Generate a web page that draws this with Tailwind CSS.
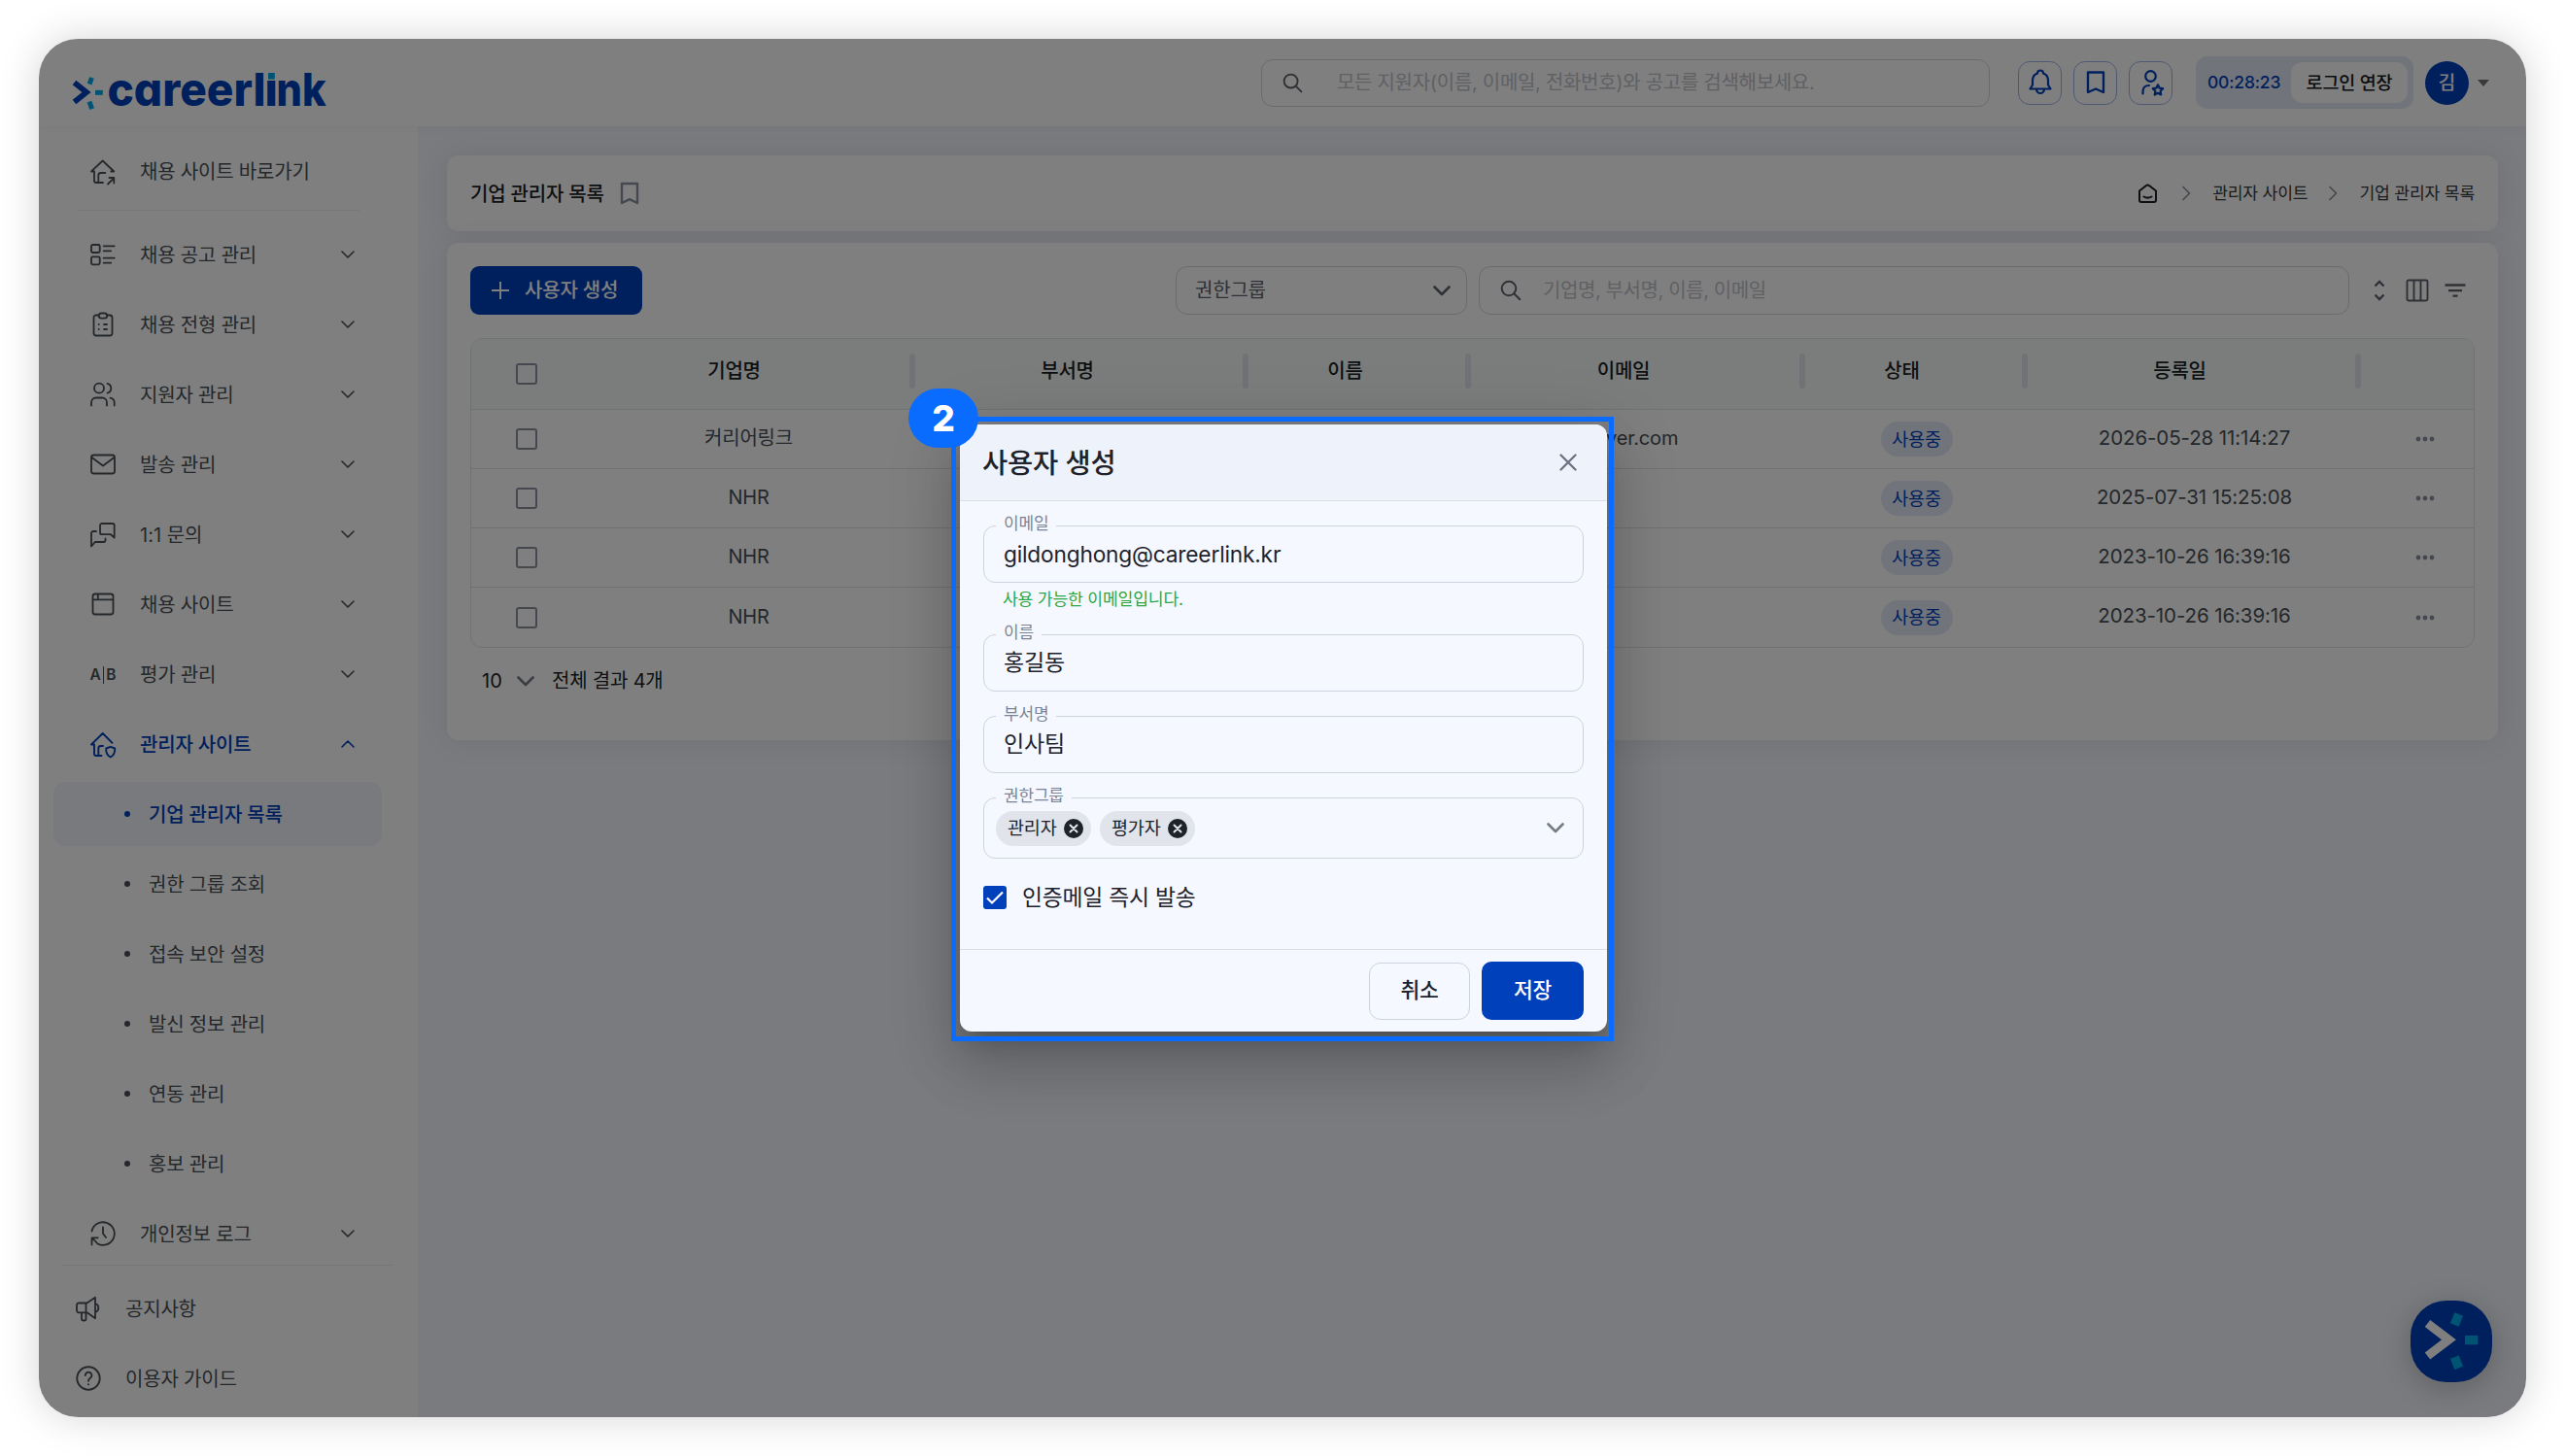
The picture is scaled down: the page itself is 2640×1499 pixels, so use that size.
<!DOCTYPE html>
<html lang="ko">
<head>
<meta charset="utf-8">
<title>careerlink - 기업 관리자 목록</title>
<script src="https://cdn.jsdelivr.net/npm/@tailwindcss/browser@4"></script>
</head>
<body class="w-[2640px] h-[1499px] overflow-hidden bg-white p-10 font-['Inter','Noto_Sans_CJK_KR',sans-serif] text-[20px] leading-none tracking-[-0.01em] whitespace-nowrap text-[#495057]">

<!-- shared symbols -->
<svg class="hidden">
  <symbol id="down" viewBox="0 0 14 8"><path d="M1 1l6 6 6-6" fill="none" stroke="currentColor" stroke-width="1.6" stroke-linecap="round" stroke-linejoin="round"/></symbol>
  <symbol id="drop" viewBox="0 0 18 11"><path d="M1.5 1.5L9 9l7.5-7.5" fill="none" stroke="currentColor" stroke-width="2.6" stroke-linecap="round" stroke-linejoin="round"/></symbol>
  <symbol id="right" viewBox="0 0 9 16"><path d="M1 1.5L7.5 8 1 14.500" fill="none" stroke="currentColor" stroke-width="1.7" stroke-linecap="round" stroke-linejoin="round"/></symbol>
  <symbol id="search" viewBox="0 0 22 22"><circle cx="9" cy="9" r="7.300" fill="none" stroke="currentColor" stroke-width="2"/><path d="M14.300 14.300l6 6" stroke="currentColor" stroke-width="2" stroke-linecap="round"/></symbol>
  <symbol id="remove" viewBox="0 0 20 20"><circle cx="10" cy="10" r="10" fill="#1d222b"/><path d="M6.500 6.500l7 7M13.500 6.500l-7 7" stroke="#e1e4ea" stroke-width="2" stroke-linecap="round"/></symbol>
  <symbol id="dots" viewBox="0 0 20 6"><circle cx="3" cy="3" r="2.400" fill="currentColor"/><circle cx="10" cy="3" r="2.400" fill="currentColor"/><circle cx="17" cy="3" r="2.400" fill="currentColor"/></symbol>
</svg>

<div class="relative h-[1419px] w-[2560px] rounded-[40px] shadow-[0_0_40px_rgba(0,0,0,0.17)]">
 <div class="relative flex h-[1419px] w-[2560px] flex-col overflow-hidden rounded-[40px] bg-white">

  <!-- header -->
  <header class="relative z-10 flex h-[90px] shrink-0 items-center bg-white pr-[38px] pl-[33px] shadow-[0_0_12px_rgba(0,0,0,0.05)]">
    <svg class="mt-[10px] h-[80px] w-[280px]" viewBox="73 50 280 80">
      <path d="M76.500 85l12.500 10-12.500 10" fill="none" stroke="#0041bb" stroke-width="5.800"/>
      <g fill="#00a9e6"><rect x="-2.500" y="-3.500" width="5" height="7" transform="translate(93.300 83.300) rotate(20)"/><rect x="98" y="92.800" width="7.800" height="5"/><rect x="-2.500" y="-4" width="5" height="8" transform="translate(93.300 108.300) rotate(-20)"/></g>
      <g class="font-['Inter'] text-[47px] font-extrabold tracking-normal [font-feature-settings:'cv11']" fill="#0041bb">
        <text y="109"><tspan x="110.500" textLength="163" lengthAdjust="spacingAndGlyphs">careerl</tspan><tspan x="272.500">i</tspan><tspan x="284.500" textLength="51" lengthAdjust="spacingAndGlyphs">nk</tspan></text>
      </g>
      <rect x="273.500" y="70" width="12" height="12.500" fill="#fff"/><rect x="276" y="75" width="6.800" height="6.600" fill="#00a9e6"/>
    </svg>
    <div class="ml-auto flex h-[49px] w-[750px] items-center rounded-xl border border-[#d3d6dc] pl-[21px] text-[#bfc2c9]">
      <svg class="size-[21px] text-[#5c626d]"><use href="#search"/></svg>
      <span class="ml-[35px] tracking-[-0.015em]">모든 지원자(이름, 이메일, 전화번호)와 공고를 검색해보세요.</span>
    </div>
    <div class="ml-[29px] flex gap-3 text-[#0041bb]">
      <div class="flex size-[45px] items-center justify-center rounded-xl border border-[#9db5e6]">
        <svg class="size-[30px]" viewBox="0 0 30 30" fill="none" stroke="currentColor" stroke-width="2.200" stroke-linejoin="round" stroke-linecap="round"><path d="M4.500 21.500h21L23 17.500V13c0-4-2-6.500-5-7.500a3 3 0 0 0-6 0c-3 1-5 3.500-5 7.500v4.500zM11 21.500a4 4.500 0 0 0 8 0"/></svg>
      </div>
      <div class="flex size-[45px] items-center justify-center rounded-xl border border-[#9db5e6]">
        <svg class="size-[30px]" viewBox="0 0 30 30" fill="none" stroke="currentColor" stroke-width="2.400" stroke-linejoin="round"><path d="M7 4.500h16v20.500l-8-3.500-8 3.500z"/></svg>
      </div>
      <div class="flex size-[45px] items-center justify-center rounded-xl border border-[#9db5e6]">
        <svg class="size-[30px]" viewBox="0 0 30 30" fill="none" stroke="currentColor" stroke-width="2.200" stroke-linejoin="round" stroke-linecap="round"><circle cx="14.500" cy="8.500" r="5.300"/><path d="M6.500 26.500v-2c0-4 2.500-6.500 6.500-6.500M22 17.300l1.600 3.400 3.600.5-2.600 2.600.6 3.700-3.200-1.700-3.300 1.700.7-3.700-2.700-2.600 3.700-.5z"/></svg>
      </div>
    </div>
    <div class="ml-6 flex h-[54px] w-[224px] items-center rounded-xl bg-[#e3e8f7] pl-3">
      <span class="w-[86px] text-[17.500px] font-medium text-[#0041bb]">00:28:23</span>
      <span class="flex h-[42px] w-[120px] items-center justify-center rounded-xl bg-white text-[18.500px] font-medium text-[#16181c]">로그인 연장</span>
    </div>
    <div class="ml-3 flex size-[45px] items-center justify-center rounded-full bg-[#0041bb] text-[19px] font-medium text-white">김</div>
    <svg class="ml-[9px] h-[7px] w-3" viewBox="0 0 12 7"><path d="M0 0h12L6 7z" fill="#757575"/></svg>
  </header>

  <div class="flex flex-1">
    <!-- sidebar -->
    <nav class="w-[390px] shrink-0 bg-white pt-[10px] [&>div>span]:pt-px">
      <div class="flex h-[72px] items-center pl-[51px]">
        <svg class="size-[30px]" viewBox="0 0 30 30" fill="none" stroke="currentColor" stroke-width="1.800" stroke-linecap="round" stroke-linejoin="round"><path d="M3 15.500h3L3 15.300 14.700 4.500l11.600 11h-3M6 15.500V25a2 2 0 0 0 2 2h7M10.300 27v-7.500a2.500 2.500 0 0 1 2.500-2.500h4.500M20 28.500l6.300-6.200M21.500 22h4.800v5.500"/></svg>
        <span class="ml-[23px]">채용 사이트 바로가기</span>
      </div>
      <div class="mt-1 mb-[9px] ml-[39px] h-px w-[291px] bg-[#eeeff2]"></div>
      <div class="flex h-[72px] items-center pl-[51px]">
        <svg class="size-[30px]" viewBox="0 0 30 30" fill="none" stroke="currentColor" stroke-width="1.800" stroke-linecap="round"><rect x="3" y="5" width="8.700" height="8" rx="1.500"/><rect x="3" y="17.300" width="8.700" height="8" rx="1.500"/><path d="M15.700 6.300h11M15.700 11.300h7.500M15.700 18.700h11M15.700 23.700h7.500"/></svg>
        <span class="ml-[23px] w-[207px]">채용 공고 관리</span><svg class="h-2 w-[14px]"><use href="#down"/></svg>
      </div>
      <div class="flex h-[72px] items-center pl-[51px]">
        <svg class="size-[30px]" viewBox="0 0 30 30" fill="none" stroke="currentColor" stroke-width="1.800" stroke-linecap="round"><path d="M10.500 5.500H8a2.500 2.500 0 0 0-2.500 2.500v16a2.500 2.500 0 0 0 2.500 2.500h14a2.500 2.500 0 0 0 2.500-2.500V8A2.500 2.500 0 0 0 22 5.500h-2.500"/><rect x="10.700" y="3.500" width="8.500" height="5.200" rx="2.600"/><path d="M10.700 15h.1M10.700 20h.1M16 15h3M16 20h3"/></svg>
        <span class="ml-[23px] w-[207px]">채용 전형 관리</span><svg class="h-2 w-[14px]"><use href="#down"/></svg>
      </div>
      <div class="flex h-[72px] items-center pl-[51px]">
        <svg class="size-[30px]" viewBox="0 0 30 30" fill="none" stroke="currentColor" stroke-width="1.800" stroke-linecap="round"><circle cx="11" cy="8.700" r="5"/><path d="M3 26.500v-3a5 5 0 0 1 5-5h6a5 5 0 0 1 5 5v3M19.500 3.900a5 5 0 0 1 0 9.700M22.500 18.700a5 5 0 0 1 4.200 5v2.800"/></svg>
        <span class="ml-[23px] w-[207px]">지원자 관리</span><svg class="h-2 w-[14px]"><use href="#down"/></svg>
      </div>
      <div class="flex h-[72px] items-center pl-[51px]">
        <svg class="size-[30px]" viewBox="0 0 30 30" fill="none" stroke="currentColor" stroke-width="1.800" stroke-linejoin="round"><rect x="3" y="5.500" width="24" height="19" rx="2.500"/><path d="M3.500 8L15 16.500 26.500 8"/></svg>
        <span class="ml-[23px] w-[207px]">발송 관리</span><svg class="h-2 w-[14px]"><use href="#down"/></svg>
      </div>
      <div class="flex h-[72px] items-center pl-[51px]">
        <svg class="size-[30px]" viewBox="0 0 30 30" fill="none" stroke="currentColor" stroke-width="1.800" stroke-linejoin="round" stroke-linecap="round"><path d="M26.700 18.500l-3.800-3.300H14a2 2 0 0 1-2-2V6a2 2 0 0 1 2-2h10.700a2 2 0 0 1 2 2zM8 12H5a2 2 0 0 0-2 2v13.500L6.800 23H15.500a2 2 0 0 0 2-2v-1.500"/></svg>
        <span class="ml-[23px] w-[207px] tracking-normal">1:1 문의</span><svg class="h-2 w-[14px]"><use href="#down"/></svg>
      </div>
      <div class="flex h-[72px] items-center pl-[51px]">
        <svg class="size-[30px]" viewBox="0 0 30 30" fill="none" stroke="currentColor" stroke-width="1.800"><rect x="4.500" y="4.500" width="21" height="21" rx="2.500"/><path d="M4.500 10.300h21M9.800 4.500v5.500"/></svg>
        <span class="ml-[23px] w-[207px]">채용 사이트</span><svg class="h-2 w-[14px]"><use href="#down"/></svg>
      </div>
      <div class="flex h-[72px] items-center pl-[51px]">
        <span class="flex w-[30px] items-center justify-center gap-[2px] text-[15.500px] font-semibold tracking-normal"><span>A</span><span class="h-[18px] w-[1.500px] bg-[#495057]"></span><span>B</span></span>
        <span class="ml-[23px] w-[207px]">평가 관리</span><svg class="h-2 w-[14px]"><use href="#down"/></svg>
      </div>
      <div class="flex h-[72px] items-center pl-[51px] font-medium text-[#0041bb]">
        <svg class="size-[30px]" viewBox="0 0 30 30" fill="none" stroke="currentColor" stroke-width="1.900" stroke-linecap="round" stroke-linejoin="round"><path d="M6 15.500H3L14.700 4l9.800 9.800M6 15.500V25a2 2 0 0 0 2 2h5.500M10.300 27v-7.500a2.500 2.500 0 0 1 2.500-2.500H15M22.700 17.800l4.500 1.700c.3 4.300-1 7.300-4.500 9-3.500-1.700-4.800-4.700-4.500-9z"/></svg>
        <span class="ml-[23px] w-[207px]">관리자 사이트</span><svg class="h-2 w-[14px] rotate-180"><use href="#down"/></svg>
      </div>
      <div class="flex h-[72px] items-center px-[15px] font-medium text-[#0041bb]">
        <div class="flex h-[66px] w-[338px] items-center rounded-xl bg-[#f1f4fc] pl-[73px]"><span class="size-[6px] rounded-full bg-current"></span><span class="ml-[19px] pt-px">기업 관리자 목록</span></div>
      </div>
      <div class="flex h-[72px] items-center pl-[88px]"><span class="size-[6px] rounded-full bg-current"></span><span class="ml-[19px]">권한 그룹 조회</span></div>
      <div class="flex h-[72px] items-center pl-[88px]"><span class="size-[6px] rounded-full bg-current"></span><span class="ml-[19px]">접속 보안 설정</span></div>
      <div class="flex h-[72px] items-center pl-[88px]"><span class="size-[6px] rounded-full bg-current"></span><span class="ml-[19px]">발신 정보 관리</span></div>
      <div class="flex h-[72px] items-center pl-[88px]"><span class="size-[6px] rounded-full bg-current"></span><span class="ml-[19px]">연동 관리</span></div>
      <div class="flex h-[72px] items-center pl-[88px]"><span class="size-[6px] rounded-full bg-current"></span><span class="ml-[19px]">홍보 관리</span></div>
      <div class="-mb-1 flex h-[72px] items-center pl-[51px]">
        <svg class="size-[30px]" viewBox="0 0 30 30" fill="none" stroke="currentColor" stroke-width="1.800" stroke-linecap="round" stroke-linejoin="round"><path d="M3.500 12.500A11.800 11.800 0 1 1 9.500 25.500L4 19.500M3.500 26.500V19.300h6.300M15 8.500V15l3 4"/></svg>
        <span class="ml-[23px] w-[207px]">개인정보 로그</span><svg class="h-2 w-[14px]"><use href="#down"/></svg>
      </div>
      <div class="mb-2 ml-6 h-px w-[341px] bg-[#eeeff2]"></div>
      <div class="flex h-[72px] items-center pl-9">
        <svg class="size-[30px]" viewBox="0 0 30 30" fill="none" stroke="currentColor" stroke-width="1.800" stroke-linecap="round" stroke-linejoin="round"><path d="M5 9.500h8.500L22 3.800v21.500l-8.500-6H5a2 2 0 0 1-2-2v-5.800a2 2 0 0 1 2-2zM12.500 9.500v9.800M8 19.500V26a1.500 1.500 0 0 0 1.500 1.500h1.500a1.500 1.500 0 0 0 1.500-1.500v-6.500M22 10a4.700 4.700 0 0 1 0 9"/></svg>
        <span class="ml-[23px]">공지사항</span>
      </div>
      <div class="flex h-[72px] items-center pl-9">
        <svg class="size-[30px]" viewBox="0 0 30 30" fill="none" stroke="currentColor" stroke-width="1.900" stroke-linecap="round"><circle cx="15" cy="15" r="11.700"/><path d="M11.800 12a3.300 3.300 0 1 1 5 2.800c-1.300.8-1.800 1.400-1.800 3M15 21.200v.2"/></svg>
        <span class="ml-[23px]">이용자 가이드</span>
      </div>
    </nav>

    <!-- main -->
    <main class="flex flex-1 flex-col gap-3 bg-[#f4f6fc] pt-[30px] pr-[29px] pl-[30px]">
      <section class="flex h-[78px] items-center rounded-xl bg-white pr-6 pl-[24px] shadow-[0_0_30px_rgba(60,60,90,0.10)]">
        <h1 class="pt-[2px] text-[20px] font-medium text-[#1c1f24]">기업 관리자 목록</h1>
        <svg class="ml-4 h-6 w-5" viewBox="0 0 20 24"><path d="M2 2h16v20l-8-3.800L2 22z" fill="none" stroke="#8b919c" stroke-width="2.400" stroke-linejoin="round"/></svg>
        <div class="ml-auto flex items-center text-[17.200px] text-[#33383f]">
          <svg class="h-5 w-[21px]" viewBox="0 0 21 20" fill="none" stroke="#1c1f24" stroke-width="2" stroke-linejoin="round" stroke-linecap="round"><path d="M2 7.500l6.700-5.300a3 3 0 0 1 3.600 0L19 7.500V17a2 2 0 0 1-2 2H4a2 2 0 0 1-2-2zM6.500 13.500c2.500 1.400 5.500 1.400 8 0"/></svg>
          <svg class="ml-[25px] h-4 w-[9px] text-[#8b919c]"><use href="#right"/></svg>
          <span class="ml-[22px]">관리자 사이트</span>
          <svg class="ml-[22px] h-4 w-[9px] text-[#8b919c]"><use href="#right"/></svg>
          <span class="ml-[22px]">기업 관리자 목록</span>
        </div>
      </section>

      <section class="h-[512px] rounded-xl bg-white px-6 pt-6 shadow-[0_0_30px_rgba(60,60,90,0.10)]">
        <div class="flex h-[50px] items-center">
          <div class="flex h-[50px] w-[177px] items-center rounded-[9px] bg-[#0041bb] pl-[22px] font-medium text-white">
            <svg class="size-[18px]" viewBox="0 0 18 18"><path d="M9 0v18M0 9h18" stroke="#fff" stroke-width="1.900"/></svg>
            <span class="ml-4">사용자 생성</span>
          </div>
          <div class="ml-auto flex h-[50px] w-[300px] items-center justify-between rounded-xl border border-[#d3d6dc] pr-4 pl-[19px] text-[#5c626d]">
            <span>권한그룹</span><svg class="h-[11px] w-[18px]"><use href="#drop"/></svg>
          </div>
          <div class="ml-3 flex h-[50px] w-[896px] items-center rounded-xl border border-[#d3d6dc] pl-[21px] text-[#bfc2c9]">
            <svg class="size-[22px] text-[#5c626d]"><use href="#search"/></svg>
            <span class="ml-[22px] tracking-[-0.02em]">기업명, 부서명, 이름, 이메일</span>
          </div>
          <svg class="ml-[25px] h-[22px] w-3" viewBox="0 0 12 22" fill="none" stroke="#5c626d" stroke-width="2.300"><path d="M1.500 6.500L6 2l4.500 4.500M1.500 15.500L6 20l4.500-4.500"/></svg>
          <svg class="ml-[21px] size-6" viewBox="0 0 24 24" fill="none" stroke="#5c626d" stroke-width="1.900"><rect x="1.500" y="1.500" width="21" height="21" rx="1.500"/><path d="M8.500 1.500v21M15.500 1.500v21"/></svg>
          <svg class="mr-[9px] ml-4 h-[14px] w-[22px]" viewBox="0 0 22 14" stroke="#5c626d" stroke-width="2.300"><path d="M.5 1.500h21M4 7.200h14M8.500 12.700h5"/></svg>
        </div>

        <!-- table -->
        <div class="mt-6 w-[2063px] overflow-hidden rounded-xl border border-[#e3e5ea]">
          <div class="grid h-[73px] grid-cols-[114px_343px_343px_229px_344px_229px_343px_1fr] border-b border-[#e0e2e7] bg-[#f6fbf8] pt-[15px] font-medium text-[#1c1f24]">
            <div class="flex justify-center pt-[10px]"><span class="size-[22px] rounded-[3px] border-2 border-[#8b919c]"></span></div>
            <div class="flex"><span class="flex-1 pt-2 pr-6 text-center">기업명</span><span class="h-9 w-[6px] rounded-sm bg-[#e3e5ea]"></span></div>
            <div class="flex"><span class="flex-1 pt-2 pr-6 text-center">부서명</span><span class="h-9 w-[6px] rounded-sm bg-[#e3e5ea]"></span></div>
            <div class="flex"><span class="flex-1 pt-2 pr-6 text-center">이름</span><span class="h-9 w-[6px] rounded-sm bg-[#e3e5ea]"></span></div>
            <div class="flex"><span class="flex-1 pt-2 pr-6 text-center">이메일</span><span class="h-9 w-[6px] rounded-sm bg-[#e3e5ea]"></span></div>
            <div class="flex"><span class="flex-1 pt-2 pr-6 text-center">상태</span><span class="h-9 w-[6px] rounded-sm bg-[#e3e5ea]"></span></div>
            <div class="flex"><span class="flex-1 pt-2 pr-6 text-center">등록일</span><span class="h-9 w-[6px] rounded-sm bg-[#e3e5ea]"></span></div>
          </div>
          <div id="rows" class="divide-y divide-[#e0e2e7]"></div>
        </div>

        <div class="mt-6 flex items-center pl-3 text-[20px] text-[#1c1f24]">
          <span class="w-9 tracking-normal">10</span>
          <svg class="h-[11px] w-[18px] text-[#757a84]"><use href="#drop"/></svg>
          <span class="ml-[18px]">전체 결과 4개</span>
        </div>
      </section>
    </main>
  </div>

  <!-- chat launcher -->
  <svg class="absolute top-[1299px] left-[2441px] size-[84px] rounded-[37px] bg-[#0041bb] shadow-[0_6px_30px_rgba(0,0,0,0.22)]" viewBox="0 0 84 84">
    <path d="M17.500 23.500L39.500 40.300 17.500 57" fill="none" stroke="#fff" stroke-width="9"/>
    <g fill="#00a9e6"><rect x="-4.700" y="-6" width="9.400" height="12" transform="translate(47.500 19.500) rotate(22)"/><rect x="56" y="36" width="13.300" height="9.300"/><rect x="-4.700" y="-6" width="9.400" height="12" transform="translate(47.500 63.800) rotate(-22)"/></g>
  </svg>

  <!-- backdrop -->
  <div class="absolute inset-0 z-20 bg-black/50"></div>

  <!-- dialog -->
  <div class="absolute top-[397px] left-[948px] z-30 flex h-[625px] w-[666px] flex-col rounded-[12px] bg-[#f5f8ff] text-[#1d222b] shadow-[0_16px_22px_-10px_rgba(0,0,0,0.2),0_36px_57px_4px_rgba(0,0,0,0.14),0_13px_69px_12px_rgba(0,0,0,0.12)]">
    <div class="flex h-[79px] shrink-0 items-center justify-between rounded-t-[12px] border-b border-[#d9dee8] bg-[#eef3fb] pr-[31px] pl-6">
      <h2 class="-ml-px pt-[2px] text-[28.500px] font-medium">사용자 생성</h2>
      <svg class="size-[18px]" viewBox="0 0 18 18"><path d="M1.500 1.500l15 15M16.500 1.500l-15 15" stroke="#6b7280" stroke-width="2.300" stroke-linecap="round"/></svg>
    </div>
    <div class="flex flex-1 flex-col px-6 pt-[25px]">
      <div class="relative flex h-[59px] items-center rounded-xl border border-[#ccd3df] pl-5 text-[22.700px] tracking-[-0.008em]">
        <span class="absolute -top-3 left-3 h-[22px] bg-[#f5f8ff] px-2 pt-px text-[17px] text-[#7a8496]">이메일</span><span class="pt-px">gildonghong@careerlink.kr</span>
      </div>
      <p class="h-[53px] pt-2 pl-5 text-[17.200px] text-[#2ba745]">사용 가능한 이메일입니다.</p>
      <div class="relative flex h-[59px] items-center rounded-xl border border-[#ccd3df] pl-5 text-[23px]">
        <span class="absolute -top-3 left-3 h-[22px] bg-[#f5f8ff] px-2 pt-px text-[17px] text-[#7a8496]">이름</span>홍길동
      </div>
      <div class="relative mt-[25px] flex h-[59px] items-center rounded-xl border border-[#ccd3df] pl-5 text-[23px]">
        <span class="absolute -top-3 left-3 h-[22px] bg-[#f5f8ff] px-2 pt-px text-[17px] text-[#7a8496]">부서명</span>인사팀
      </div>
      <div class="relative mt-[25px] flex h-[63px] items-center gap-[9px] rounded-xl border border-[#ccd3df] pl-3 text-[18.500px]">
        <span class="absolute -top-3 left-3 h-[22px] bg-[#f5f8ff] px-2 pt-px text-[17px] text-[#7a8496]">권한그룹</span>
        <span class="flex h-9 w-[98px] items-center gap-2 rounded-full bg-[#e1e4ea] pl-3"><span>관리자</span><svg class="size-5"><use href="#remove"/></svg></span>
        <span class="flex h-9 w-[98px] items-center gap-2 rounded-full bg-[#e1e4ea] pl-3"><span>평가자</span><svg class="size-5"><use href="#remove"/></svg></span>
        <svg class="mr-[19px] ml-auto h-[11px] w-[18px] text-[#757a84]"><use href="#drop"/></svg>
      </div>
      <div class="mt-[28px] flex items-center text-[22.800px]">
        <svg class="size-6" viewBox="0 0 24 24"><rect width="24" height="24" rx="3" fill="#0041bb"/><path d="M4 12.500l5 5L20 6.500" fill="none" stroke="#fff" stroke-width="2.200"/></svg>
        <span class="ml-4">인증메일 즉시 발송</span>
      </div>
    </div>
    <div class="flex h-[85px] shrink-0 items-center justify-end gap-3 border-t border-[#d9dee8] pr-6 text-[21.500px] font-medium">
      <div class="flex h-[59px] w-[104px] items-center justify-center rounded-[12px] border border-[#ccd3df]">취소</div>
      <div class="flex h-[60px] w-[105px] items-center justify-center rounded-[10px] bg-[#0041bb] text-white">저장</div>
    </div>
  </div>

  <!-- step highlight -->
  <div class="absolute top-[389px] left-[939px] z-40 h-[643px] w-[682px] border-5 border-[#0a6cff]"></div>
  <div class="absolute top-[360px] left-[895px] z-50 flex h-[61px] w-[72px] items-center justify-center rounded-full bg-[#0a6cff] text-[37px] font-extrabold text-white">2</div>
 </div>
</div>

<script>
const rows = [
  ['커리어링크', 'naver.com', '2026-05-28 11:14:27'],
  ['NHR', '', '2025-07-31 15:25:08'],
  ['NHR', '', '2023-10-26 16:39:16'],
  ['NHR', '', '2023-10-26 16:39:16'],
];
document.getElementById('rows').innerHTML = rows.map(([company, mail, date]) => `
  <div class="grid h-[61px] grid-cols-[114px_343px_343px_229px_344px_229px_343px_1fr] items-center justify-items-center">
    <span class="size-[22px] rounded-[3px] border-2 border-[#8b919c]"></span>
    <span class="-mt-[2px]">${company}</span><span></span><span></span>
    <span class="-mt-[2px] pr-[14px] text-[20px]">${mail}</span>
    <span class="flex h-9 w-[74px] items-center justify-center rounded-full bg-[#e3e8f7] text-[18.500px] text-[#0041bb]">사용중</span>
    <span class="-mt-[2px] text-[20.500px] tracking-[-0.005em]">${date}</span>
    <svg class="ml-[16px] h-[6px] w-5 text-[#8b919c]"><use href="#dots"/></svg>
  </div>`).join('');
</script>
</body>
</html>
